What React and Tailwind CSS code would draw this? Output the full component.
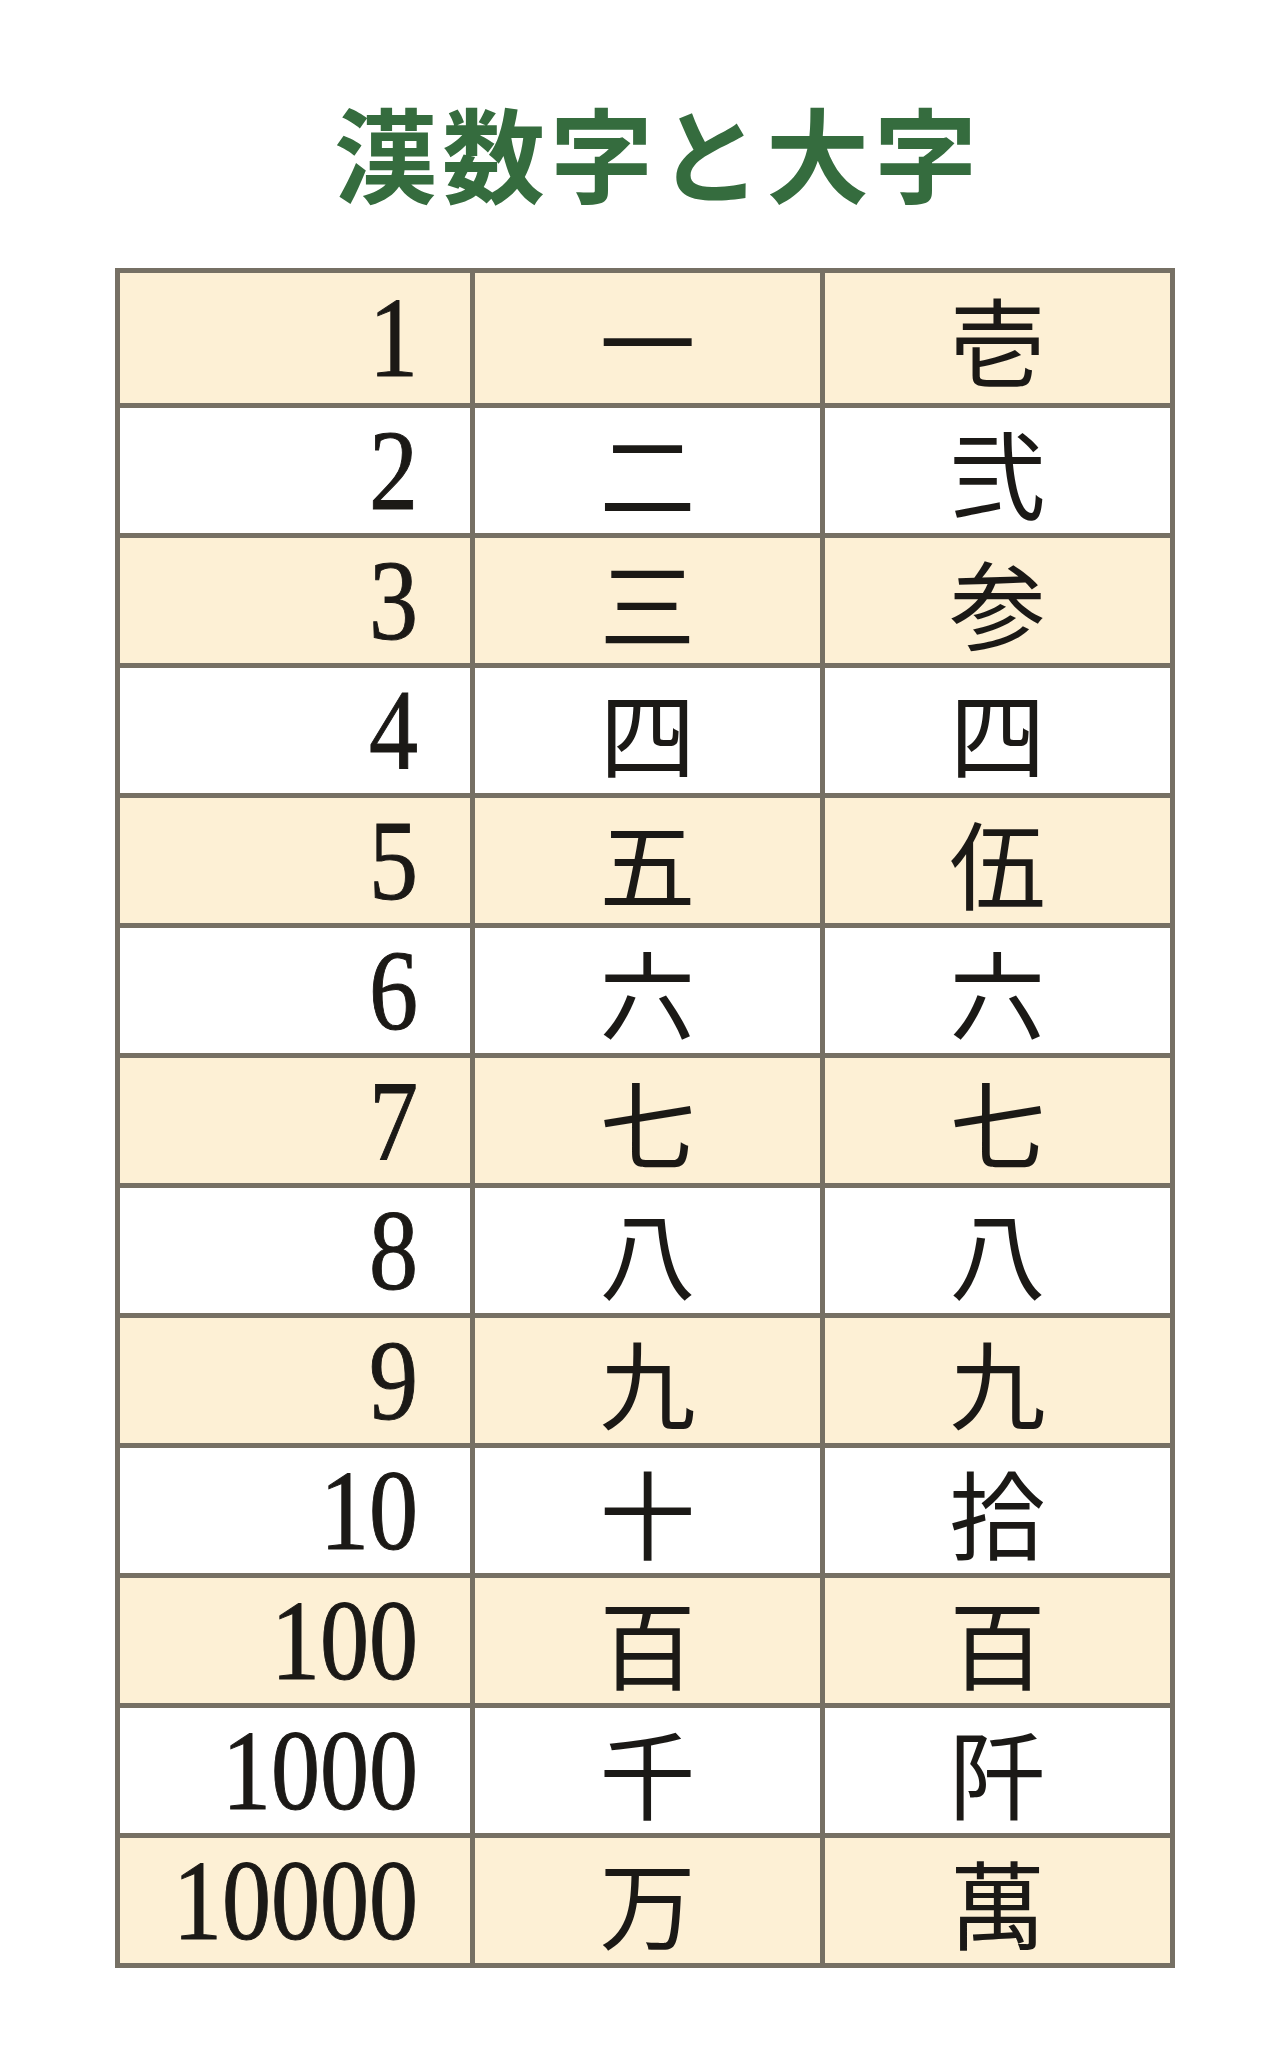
const rows = [
  ["1", "一", "壱"],
  ["2", "二", "弐"],
  ["3", "三", "参"],
  ["4", "四", "四"],
  ["5", "五", "伍"],
  ["6", "六", "六"],
  ["7", "七", "七"],
  ["8", "八", "八"],
  ["9", "九", "九"],
  ["10", "十", "拾"],
  ["100", "百", "百"],
  ["1000", "千", "阡"],
  ["10000", "万", "萬"],
];

export default function App() {
  return (
    <div className="min-h-[2062px] bg-white pt-[100px]">
      <h1
        className="w-[1060px] ml-[128px] text-center text-[103px] leading-[103px] font-bold tracking-[5px] text-[#356c3e]"
        style={{ fontFamily: '"Noto Sans CJK JP", sans-serif' }}
      >
        漢数字と大字
      </h1>

      <div className="mt-[65px] ml-[115px] w-[1060px] border-[5px] border-[#767064] text-[#1b1916]">
        {rows.map(([num, kan, dai], i) => (
          <div
            key={num}
            className={
              "grid grid-cols-3 h-[130px] " +
              (i === 0 ? "h-[125px] " : "border-t-[5px] border-[#767064] ") +
              (i % 2 === 0 ? "bg-[#fdf0d5]" : "bg-white")
            }
          >
            <div className="flex items-center justify-end pr-[52px]">
              <span
                className="inline-block origin-right scale-x-[0.86] text-[114px] leading-none [-webkit-text-stroke:1px_#1b1916]"
                style={{ fontFamily: '"Liberation Serif", serif' }}
              >
                {num}
              </span>
            </div>
            <div
              className="flex items-center justify-center border-l-[5px] border-[#767064] text-[96px] leading-none"
              style={{ fontFamily: '"Noto Sans CJK JP", sans-serif' }}
            >
              {kan}
            </div>
            <div
              className="flex items-center justify-center border-l-[5px] border-[#767064] text-[96px] leading-none"
              style={{ fontFamily: '"Noto Sans CJK JP", sans-serif' }}
            >
              {dai}
            </div>
          </div>
        ))}
      </div>
    </div>
  );
}
